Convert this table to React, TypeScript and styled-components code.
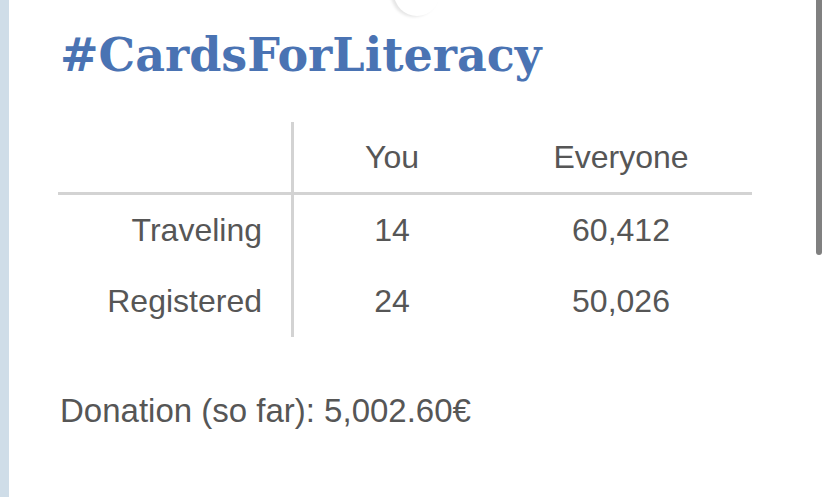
import styled, { createGlobalStyle } from 'styled-components';

const GlobalStyle = createGlobalStyle`
  html, body {
    margin: 0;
    padding: 0;
    background: #ffffff;
  }

  body {
    font-family: 'Liberation Sans', Arial, sans-serif;
    color: #565656;
  }
`;

const Page = styled.div`
  position: relative;
  display: flex;
  width: 828px;
  height: 497px;
  overflow: hidden;
  background: #ffffff;
`;

const SideStrip = styled.div`
  flex: 0 0 9px;
  background: #cfdde8;
`;

const Content = styled.div`
  flex: 1;
  padding: 0 0 0 49px;
  box-sizing: border-box;
`;

const Title = styled.h1`
  margin: 25px 0 0 2px;
  font-family: 'DejaVu Serif', 'Liberation Serif', Georgia, serif;
  font-weight: bold;
  font-size: 46px;
  line-height: 60px;
  color: #4a73b3;
`;

const Table = styled.div`
  display: grid;
  grid-template-columns: 236px 196px 262px;
  width: 694px;
  margin-top: 37px;
  font-size: 32px;
`;

const Cell = styled.div<{ $align?: 'right' | 'center'; $head?: boolean; $divider?: boolean }>`
  display: flex;
  align-items: center;
  justify-content: ${(p) => (p.$align === 'right' ? 'flex-end' : 'center')};
  height: ${(p) => (p.$head ? '70px' : '71px')};
  padding-right: ${(p) => (p.$align === 'right' ? '29px' : '0')};
  border-bottom: ${(p) => (p.$head ? '3px solid #d3d3d3' : 'none')};
  border-right: ${(p) => (p.$divider ? '3px solid #d3d3d3' : 'none')};
  box-sizing: ${(p) => (p.$head ? 'content-box' : 'border-box')};
`;

const Donation = styled.p`
  margin: 55px 0 0 2px;
  font-size: 33px;
  line-height: 38px;
`;

const ScrollThumb = styled.div`
  position: absolute;
  top: 0;
  right: 6px;
  width: 6px;
  height: 255px;
  border-radius: 0 0 3px 3px;
  background: #808080;
`;

const PeekCircle = styled.div`
  position: absolute;
  top: -30px;
  left: 394px;
  width: 46px;
  height: 46px;
  border-radius: 50%;
  background: #ffffff;
  box-shadow: -3px 1px 3px rgba(0, 0, 0, 0.1);
`;

type Row = { label: string; you: string; everyone: string };

const rows: Row[] = [
  { label: 'Traveling', you: '14', everyone: '60,412' },
  { label: 'Registered', you: '24', everyone: '50,026' },
];

const App = () => {
  return (
    <>
      <GlobalStyle />
      <Page>
        <SideStrip />
        <Content>
          <Title>#CardsForLiteracy</Title>

          <Table>
            <Cell $head $divider />
            <Cell $head>You</Cell>
            <Cell $head>Everyone</Cell>

            {rows.map((row) => [
              <Cell key={`${row.label}-label`} $align="right" $divider>
                {row.label}
              </Cell>,
              <Cell key={`${row.label}-you`}>{row.you}</Cell>,
              <Cell key={`${row.label}-everyone`}>{row.everyone}</Cell>,
            ])}
          </Table>

          <Donation>Donation (so far): 5,002.60€</Donation>
        </Content>
        <PeekCircle />
        <ScrollThumb />
      </Page>
    </>
  );
};

export default App;
